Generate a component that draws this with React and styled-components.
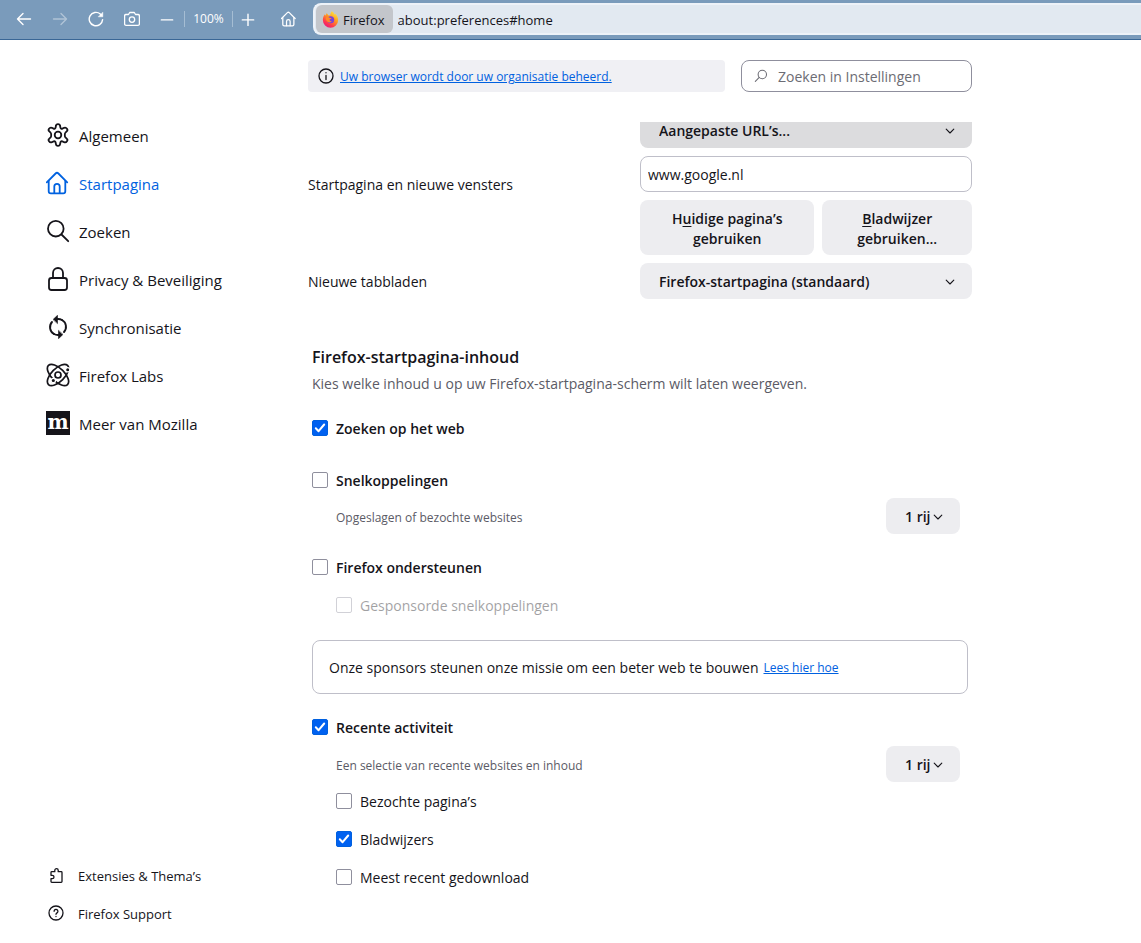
import React, { useState } from 'react';
import styled, { createGlobalStyle } from 'styled-components';

const GlobalStyle = createGlobalStyle`
  * { box-sizing: border-box; }
  body {
    margin: 0;
    background: #fff;
    color: #15141a;
    font-family: "Open Sans", "Noto Sans", sans-serif;
    font-size: 14px;
    line-height: 20px;
  }
  button, input, select { font: inherit; color: inherit; margin: 0; }
`;

/* ---------- browser toolbar ---------- */

const Toolbar = styled.header`
  display: flex;
  align-items: center;
  height: 40px;
  padding: 0 0 1px 6px;
  background: #7a9bbb;
  border-bottom: 1px solid #3a6796;
  color: #fff;
`;

const ToolButton = styled.button`
  display: flex;
  align-items: center;
  justify-content: center;
  flex: none;
  width: ${p => p.$width || 36}px;
  height: 32px;
  padding: 0;
  border: 0;
  background: none;
  font-size: 12px;
  opacity: ${p => (p.disabled ? 0.4 : 1)};
`;

const Divider = styled.span`
  flex: none;
  width: 1px;
  height: 16px;
  background: #a5bdd3;
`;

const HomeButton = styled(ToolButton)`
  margin: 0 6px 0 9px;
`;

const UrlBar = styled.div`
  display: flex;
  align-items: center;
  flex: 1;
  min-width: 0;
  height: 32px;
  padding-left: 1px;
  background: #e2e9f1;
  border: 2px solid #edf2f8;
  border-right: 0;
  border-radius: 8px 0 0 8px;
  color: #15141a;
`;

const Identity = styled.button`
  display: flex;
  align-items: center;
  gap: 4px;
  height: 28px;
  padding: 2px 8px 0 6px;
  border: 0;
  border-radius: 6px;
  background: #c3c6cb;
  font-size: 13px;

  svg { margin-bottom: 2px; }
`;

const Address = styled.input`
  flex: 1;
  min-width: 0;
  padding: 2px 6px 0 5px;
  border: 0;
  outline: 0;
  background: none;
  font-size: 13px;
`;

/* ---------- page frame ---------- */

const Page = styled.div`
  display: flex;
  height: calc(100vh - 40px);
`;

const Sidebar = styled.aside`
  display: flex;
  flex-direction: column;
  justify-content: space-between;
  flex: none;
  width: 308px;
  padding: 72px 0 10px 46px;
`;

const NavList = styled.nav`
  display: flex;
  flex-direction: column;
`;

const NavLink = styled.a`
  display: flex;
  align-items: center;
  gap: 9px;
  height: 48px;
  color: ${p => (p.$active ? '#0062e0' : '#15141a')};
  font-size: 15px;
  text-decoration: none;

  svg { margin-bottom: 2px; }
`;

const FooterLink = styled.a`
  display: flex;
  align-items: center;
  gap: 14px;
  height: 38px;
  padding-left: 2px;
  color: #15141a;
  font-size: 13px;
  text-decoration: none;

  svg { margin-bottom: 2px; }
`;

const MozillaLogo = styled.span`
  display: flex;
  justify-content: center;
  width: 24px;
  height: 24px;
  margin-bottom: 2px;
  background: #15141a;
  color: #fff;
  font: bold 20px/22px "DejaVu Serif", serif;
`;

const Main = styled.main`
  display: flex;
  flex-direction: column;
  flex: 1;
  min-width: 0;
  max-width: 664px;
`;

const StickyHeader = styled.div`
  display: flex;
  gap: 16px;
  flex: none;
  padding: 20px 0 30px;
`;

const Notice = styled.div`
  display: flex;
  align-items: center;
  gap: 6px;
  flex: 1;
  height: 32px;
  padding: 2px 10px 0;
  border-radius: 4px;
  background: #f0f0f4;

  svg { margin-bottom: 2px; }
`;

const Link = styled.a`
  color: #0061e0;
  font-size: 12px;
`;

const SearchBox = styled.label`
  display: flex;
  align-items: center;
  gap: 10px;
  width: 231px;
  height: 32px;
  padding: 0 12px;
  border: 1px solid #8f8f9d;
  border-radius: 8px;
  color: #6c6c74;
`;

const SearchInput = styled.input`
  flex: 1;
  min-width: 0;
  padding: 2px 0 0;
  border: 0;
  outline: 0;
  background: none;

  &::placeholder { color: #6c6c74; opacity: 1; }
`;

const Pane = styled.div`
  flex: 1;
  min-height: 0;
  overflow: hidden;
`;

/* ---------- form parts ---------- */

const HomeSettings = styled.section`
  display: grid;
  grid-template-columns: 1fr 332px;
  align-items: center;
  row-gap: 8px;
  margin-top: -10px;
`;

const SettingLabel = styled.label`
  padding-top: 2px;
`;

const Controls = styled.div`
  display: flex;
  flex-direction: column;
  gap: 8px;
`;

const SelectWrap = styled.div`
  display: grid;
  align-items: center;
  flex: none;
  width: ${p => (p.$small ? 74 : 332)}px;
  color: #15141a;
  font-size: 14px;

  > * { grid-area: 1 / 1; }
  > svg {
    justify-self: end;
    margin: 2px 17px 0 0;
    pointer-events: none;
  }
`;

const StyledSelect = styled.select`
  appearance: none;
  width: 100%;
  height: 36px;
  padding: 2px 19px 0;
  border: 0;
  border-radius: 8px;
  background: ${p => (p.$pressed ? '#dcdcde' : '#ededf0')};
  font-weight: 600;
`;

const TextInput = styled.input`
  width: 100%;
  height: 36px;
  padding: 0 7px;
  border: 1px solid #bfbfc9;
  border-radius: 8px;
`;

const ButtonPair = styled.div`
  display: grid;
  grid-template-columns: 7fr 6fr;
  gap: 8px;
`;

const Button = styled.button`
  min-height: 55px;
  padding: 9px 16px 6px;
  border: 0;
  border-radius: 8px;
  background: #ededf0;
  font-weight: 600;

  u { text-underline-offset: 2px; }
`;

const Content = styled.section`
  display: flex;
  flex-direction: column;
  padding: 46px 4px 0;
`;

const Heading = styled.h2`
  margin: 0;
  font-size: 16px;
  line-height: 24px;
  font-weight: 600;
`;

const Description = styled.p`
  margin: 5px 0 24px;
  color: #5b5b66;
`;

const Group = styled.div`
  display: flex;
  flex-direction: column;
  padding-bottom: ${p => p.$bottom || 0}px;
`;

const CheckLabel = styled.label`
  display: flex;
  align-items: center;
  gap: 8px;
  height: ${p => (p.$indent ? 38 : 20)}px;
  padding-top: 2px;
  margin-left: ${p => (p.$indent ? 24 : 0)}px;
  font-weight: ${p => (p.$strong ? 600 : 400)};
  opacity: ${p => (p.$disabled ? 0.4 : 1)};
`;

const Box = styled.span`
  display: grid;
  place-items: center;
  width: 16px;
  height: 16px;
  margin-bottom: 3px;

  > * { grid-area: 1 / 1; }
  > svg { pointer-events: none; }
`;

const CheckInput = styled.input`
  appearance: none;
  width: 16px;
  height: 16px;
  border: 1px solid #8f8f9d;
  border-radius: 2px;

  &:checked {
    border-color: #0060df;
    background: #0061f0;
  }
`;

const DetailRow = styled.div`
  display: flex;
  align-items: center;
  justify-content: space-between;
  padding: ${p => p.$top}px 8px 0 24px;
`;

const Detail = styled.span`
  padding-top: 3px;
  color: #5b5b66;
  font-size: 12px;
`;

const SponsoredRow = styled.div`
  padding-top: 9px;
`;

const SponsorBox = styled.div`
  display: flex;
  align-items: center;
  gap: 5px;
  height: 54px;
  margin: 16px 0 23px;
  padding: 2px 16px 0;
  border: 1px solid #bfbfc9;
  border-radius: 8px;
`;

/* ---------- icons ---------- */

const Icon = ({ size = 16, stroke = 1.2, box = 16, children }) => (
  <svg width={size} height={size} viewBox={`0 0 ${box} ${box}`} fill="none" stroke="currentColor"
    strokeWidth={stroke} strokeLinecap="round" strokeLinejoin="round" aria-hidden="true">
    {children}
  </svg>
);

const Chevron = () => <Icon size={10} box={10} stroke={1.1}><path d="M1.200 3.200 5 7l3.800-3.800" /></Icon>;

const HomeShape = () => <>
  <path d="M.8 11.300 9.600 2.500a2 2 0 0 1 2.800 0l8.800 8.800" />
  <path d="M2.700 10v10.200c0 1.300.8 2.100 2.100 2.100h12.400c1.300 0 2.100-.8 2.100-2.100V10" />
  <path d="M8.300 22v-6.400a2.700 2.700 0 0 1 5.400 0V22" />
</>;

const GearIcon = () => <Icon size={24} box={24} stroke={1.800}>
  <circle cx="12" cy="12" r="3.300" />
  <path d="M9.900 3c.3-2.400 3.900-2.400 4.200 0l.3 1.600c.2.900 1.200 1.400 2 1l1.700-.8c2.400-.9 4.400 2.100 2.600 3.600l-1.300 1.200c-.8.700-.8 4.100 0 4.800l1.300 1.200c1.800 1.500-.2 4.500-2.600 3.600l-1.700-.8c-.8-.4-1.800.1-2 1l-.3 1.600c-.3 2.400-3.900 2.400-4.200 0l-.3-1.600c-.2-.9-1.200-1.400-2-1l-1.700.8c-2.400.9-4.400-2.100-2.600-3.600l1.300-1.200c.8-.7.8-4.100 0-4.800L3.300 8.400C1.500 6.900 3.500 3.900 5.900 4.800l1.700.8c.8.4 1.800-.1 2-1z" />
</Icon>;

const SearchIcon = () => <Icon size={24} box={24} stroke={1.800}>
  <circle cx="9.800" cy="9.700" r="7.800" /><path d="m15.500 15.500 6.700 6.700" />
</Icon>;

const LockIcon = () => <Icon size={24} box={24} stroke={1.800}>
  <rect x="3" y="11" width="18" height="12" rx="2.500" /><path d="M7 11V6a5 5 0 0 1 10 0v5" />
</Icon>;

const SyncIcon = () => <Icon size={24} box={24} stroke={1.900}>
  <path d="M8 19C3.500 16.500 2.800 10.500 6 7" />
  <path d="M16 5c4.500 2.500 5.200 8.500 2 12" />
  <path d="M11 4.100c1.900-.2 3.600.1 5 .9M13 19.900c-1.900.2-3.600-.1-5-.9" />
  <path d="m7.300 4.300 4.200-4v8zM16.700 19.700l-4.200 4v-8z" fill="currentColor" strokeWidth=".6" />
</Icon>;

const LabsIcon = () => <Icon size={24} box={24} stroke={1.700}>
  <ellipse cx="12" cy="12" rx="13.500" ry="6.600" transform="rotate(45 12 12)" />
  <ellipse cx="12" cy="12" rx="13.500" ry="6.600" transform="rotate(-45 12 12)" />
  <circle cx="12" cy="12" r="3" />
  <circle cx="21.700" cy="6.800" r="2.100" fill="currentColor" stroke="#fff" strokeWidth="1.200" />
  <circle cx="7.300" cy="17.500" r="2.200" fill="currentColor" stroke="#fff" strokeWidth="1.200" />
</Icon>;

const FirefoxIcon = () => (
  <svg width="17" height="17" viewBox="0 0 16 16" aria-hidden="true">
    <defs>
      <linearGradient id="fx" x1=".8" y1="0" x2=".2" y2="1">
        <stop offset="0" stopColor="#fff04a" />
        <stop offset=".4" stopColor="#ff9a1f" />
        <stop offset=".75" stopColor="#ff3750" />
        <stop offset="1" stopColor="#e31587" />
      </linearGradient>
    </defs>
    <path fill="url(#fx)" d="M9.200.3c1.600.9 2.300 2 2.500 3.100.5-.1.700-.4.800-.8 1.600 1.500 2.700 3.500 2.700 5.900A7.200 7.200 0 0 1 8 15.700 7.200 7.200 0 0 1 .8 8.500c0-2.300.8-4 1.900-5.400l.3 1.400C3.600 3.800 4.200 3 4.200 2.200c.8.400 1.300 1.100 1.600 1.900.7-.1 1.300 0 1.900.1C7.800 2.700 8.400 1.200 9.200.3z" />
    <circle cx="8.200" cy="8.200" r="3.300" fill="#7a42d8" />
    <path fill="#ff8a28" d="M3.600 6.200c1.600-.9 3-.4 3.800.3h1.500c.3.800-1.500 1-1.700 1.600-.2 1 .7 1.800 2 1.600-.6 1.200-3 1.600-4.300.2-1-1-1.600-2.500-1.300-3.700z" />
  </svg>
);

/* ---------- composed controls ---------- */

const Select = ({ id, label, value, small, pressed }) => <SelectWrap $small={small}>
  <StyledSelect id={id} aria-label={label} defaultValue={value} $pressed={pressed}>
    <option>{value}</option>
  </StyledSelect>
  <Chevron />
</SelectWrap>;

const Check = ({ label, on = false, strong, indent, disabled }) => {
  const [checked, setChecked] = useState(on);
  return <CheckLabel $strong={strong} $indent={indent} $disabled={disabled}>
    <Box>
      <CheckInput type="checkbox" checked={checked} disabled={disabled}
        onChange={e => setChecked(e.target.checked)} />
      {checked && <Icon size={16} stroke={2}><path stroke="#fff" d="m3.800 8.300 2.800 2.900 5.600-6.700" /></Icon>}
    </Box>
    {label}
  </CheckLabel>;
};

const BrowserBar = () => <Toolbar>
  <ToolButton aria-label="Terug"><Icon stroke={1.400}><path d="M14.500 8h-13M7 2.500 1.500 8 7 13.500" /></Icon></ToolButton>
  <ToolButton aria-label="Vooruit" disabled><Icon stroke={1.400}><path d="M1.500 8h13M9 2.500 14.500 8 9 13.500" /></Icon></ToolButton>
  <ToolButton aria-label="Vernieuwen">
    <Icon stroke={1.400}>
      <path d="M14.600 8.600A6.700 6.700 0 1 1 12.300 3l1 1" />
      <path d="M14.800 1.500v4.300h-4.300z" fill="currentColor" strokeWidth=".5" />
    </Icon>
  </ToolButton>
  <ToolButton aria-label="Schermafdruk">
    <Icon stroke={1.300}>
      <path d="M2 3.500h2.500l1.200-2h4.600l1.200 2H14c.9 0 1.400.5 1.400 1.400v8c0 .9-.5 1.400-1.400 1.400H2c-.9 0-1.400-.5-1.400-1.400v-8c0-.9.5-1.400 1.400-1.400z" />
      <circle cx="8" cy="8.600" r="2.700" />
    </Icon>
  </ToolButton>
  <ToolButton aria-label="Uitzoomen" $width={34}><Icon size={14} stroke={1.600}><path d="M1.500 9h13" /></Icon></ToolButton>
  <Divider />
  <ToolButton $width={47}>100%</ToolButton>
  <Divider />
  <ToolButton aria-label="Inzoomen" $width={29}><Icon size={14} stroke={1.600}><path d="M1.500 9h13M8 2.500v13" /></Icon></ToolButton>
  <HomeButton aria-label="Startpagina"><Icon size={16} box={24} stroke={1.900}><HomeShape /></Icon></HomeButton>
  <UrlBar>
    <Identity><FirefoxIcon />Firefox</Identity>
    <Address aria-label="Adres" defaultValue="about:preferences#home" />
  </UrlBar>
</Toolbar>;

const navItems = [
  ['Algemeen', <GearIcon />],
  ['Startpagina', <Icon size={24} box={24} stroke={1.800}><HomeShape /></Icon>],
  ['Zoeken', <SearchIcon />],
  ['Privacy & Beveiliging', <LockIcon />],
  ['Synchronisatie', <SyncIcon />],
  ['Firefox Labs', <LabsIcon />],
  ['Meer van Mozilla', <MozillaLogo aria-hidden="true">m</MozillaLogo>],
];

const Navigation = () => <Sidebar>
  <NavList>
    {navItems.map(([name, icon]) => (
      <NavLink key={name} href="#" $active={name === 'Startpagina'}>{icon}{name}</NavLink>
    ))}
  </NavList>
  <NavList>
    <FooterLink href="#">
      <Icon stroke={1.300}>
        <path d="M3 14.500v-2.800h1.300a1.700 1.700 0 0 0 0-3.400H3V5.500c0-.5.300-.8.800-.8h3V3.300a1.700 1.700 0 0 1 3.400 0v1.400h3c.5 0 .8.300.8.800v9c0 .5-.3.800-.8.800H3.800c-.5 0-.8-.3-.8-.8z" />
      </Icon>
      Extensies &amp; Thema’s
    </FooterLink>
    <FooterLink href="#">
      <Icon stroke={1.300}>
        <circle cx="8" cy="8" r="7" />
        <path d="M6.100 6.300a1.900 1.900 0 1 1 2.900 1.600c-.6.400-1 .7-1 1.400M8 11.500v.1" />
      </Icon>
      Firefox Support
    </FooterLink>
  </NavList>
</Sidebar>;

const HomeContent = () => <Content>
  <Heading>Firefox-startpagina-inhoud</Heading>
  <Description>Kies welke inhoud u op uw Firefox-startpagina-scherm wilt laten weergeven.</Description>

  <Group $bottom={32}>
    <Check label="Zoeken op het web" on strong />
  </Group>
  <Group $bottom={23}>
    <Check label="Snelkoppelingen" strong />
    <DetailRow $top={8}>
      <Detail>Opgeslagen of bezochte websites</Detail>
      <Select label="Aantal rijen snelkoppelingen" value="1 rij" small />
    </DetailRow>
  </Group>
  <Group>
    <Check label="Firefox ondersteunen" strong />
    <SponsoredRow>
      <Check label="Gesponsorde snelkoppelingen" indent disabled />
    </SponsoredRow>
  </Group>
  <SponsorBox>
    Onze sponsors steunen onze missie om een beter web te bouwen
    <Link href="#">Lees hier hoe</Link>
  </SponsorBox>
  <Group>
    <Check label="Recente activiteit" on strong />
    <DetailRow $top={9}>
      <Detail>Een selectie van recente websites en inhoud</Detail>
      <Select label="Aantal rijen recente activiteit" value="1 rij" small />
    </DetailRow>
    <Check label="Bezochte pagina’s" indent />
    <Check label="Bladwijzers" on indent />
    <Check label="Meest recent gedownload" indent />
  </Group>
</Content>;

export default function App() {
  return <>
    <GlobalStyle />
    <BrowserBar />
    <Page>
      <Navigation />
      <Main>
        <StickyHeader>
          <Notice>
            <Icon stroke={1.300}><circle cx="8" cy="8" r="7" /><path d="M8 7.500v4M8 4.700v.1" /></Icon>
            <Link href="#">Uw browser wordt door uw organisatie beheerd.</Link>
          </Notice>
          <SearchBox>
            <Icon size={14}><circle cx="9.500" cy="6.300" r="4.800" /><path d="m6 9.700-4.500 4.500" /></Icon>
            <SearchInput type="text" placeholder="Zoeken in Instellingen" aria-label="Zoeken in Instellingen" />
          </SearchBox>
        </StickyHeader>
        <Pane>
          <HomeSettings>
            <SettingLabel htmlFor="homepage-url">Startpagina en nieuwe vensters</SettingLabel>
            <Controls>
              <Select label="Startpagina" value="Aangepaste URL’s..." pressed />
              <TextInput id="homepage-url" type="text" defaultValue="www.google.nl" />
              <ButtonPair>
                <Button>H<u>u</u>idige pagina’s gebruiken</Button>
                <Button><u>B</u>ladwijzer gebruiken...</Button>
              </ButtonPair>
            </Controls>
            <SettingLabel htmlFor="new-tabs">Nieuwe tabbladen</SettingLabel>
            <Select id="new-tabs" value="Firefox-startpagina (standaard)" />
          </HomeSettings>
          <HomeContent />
        </Pane>
      </Main>
    </Page>
  </>;
}
